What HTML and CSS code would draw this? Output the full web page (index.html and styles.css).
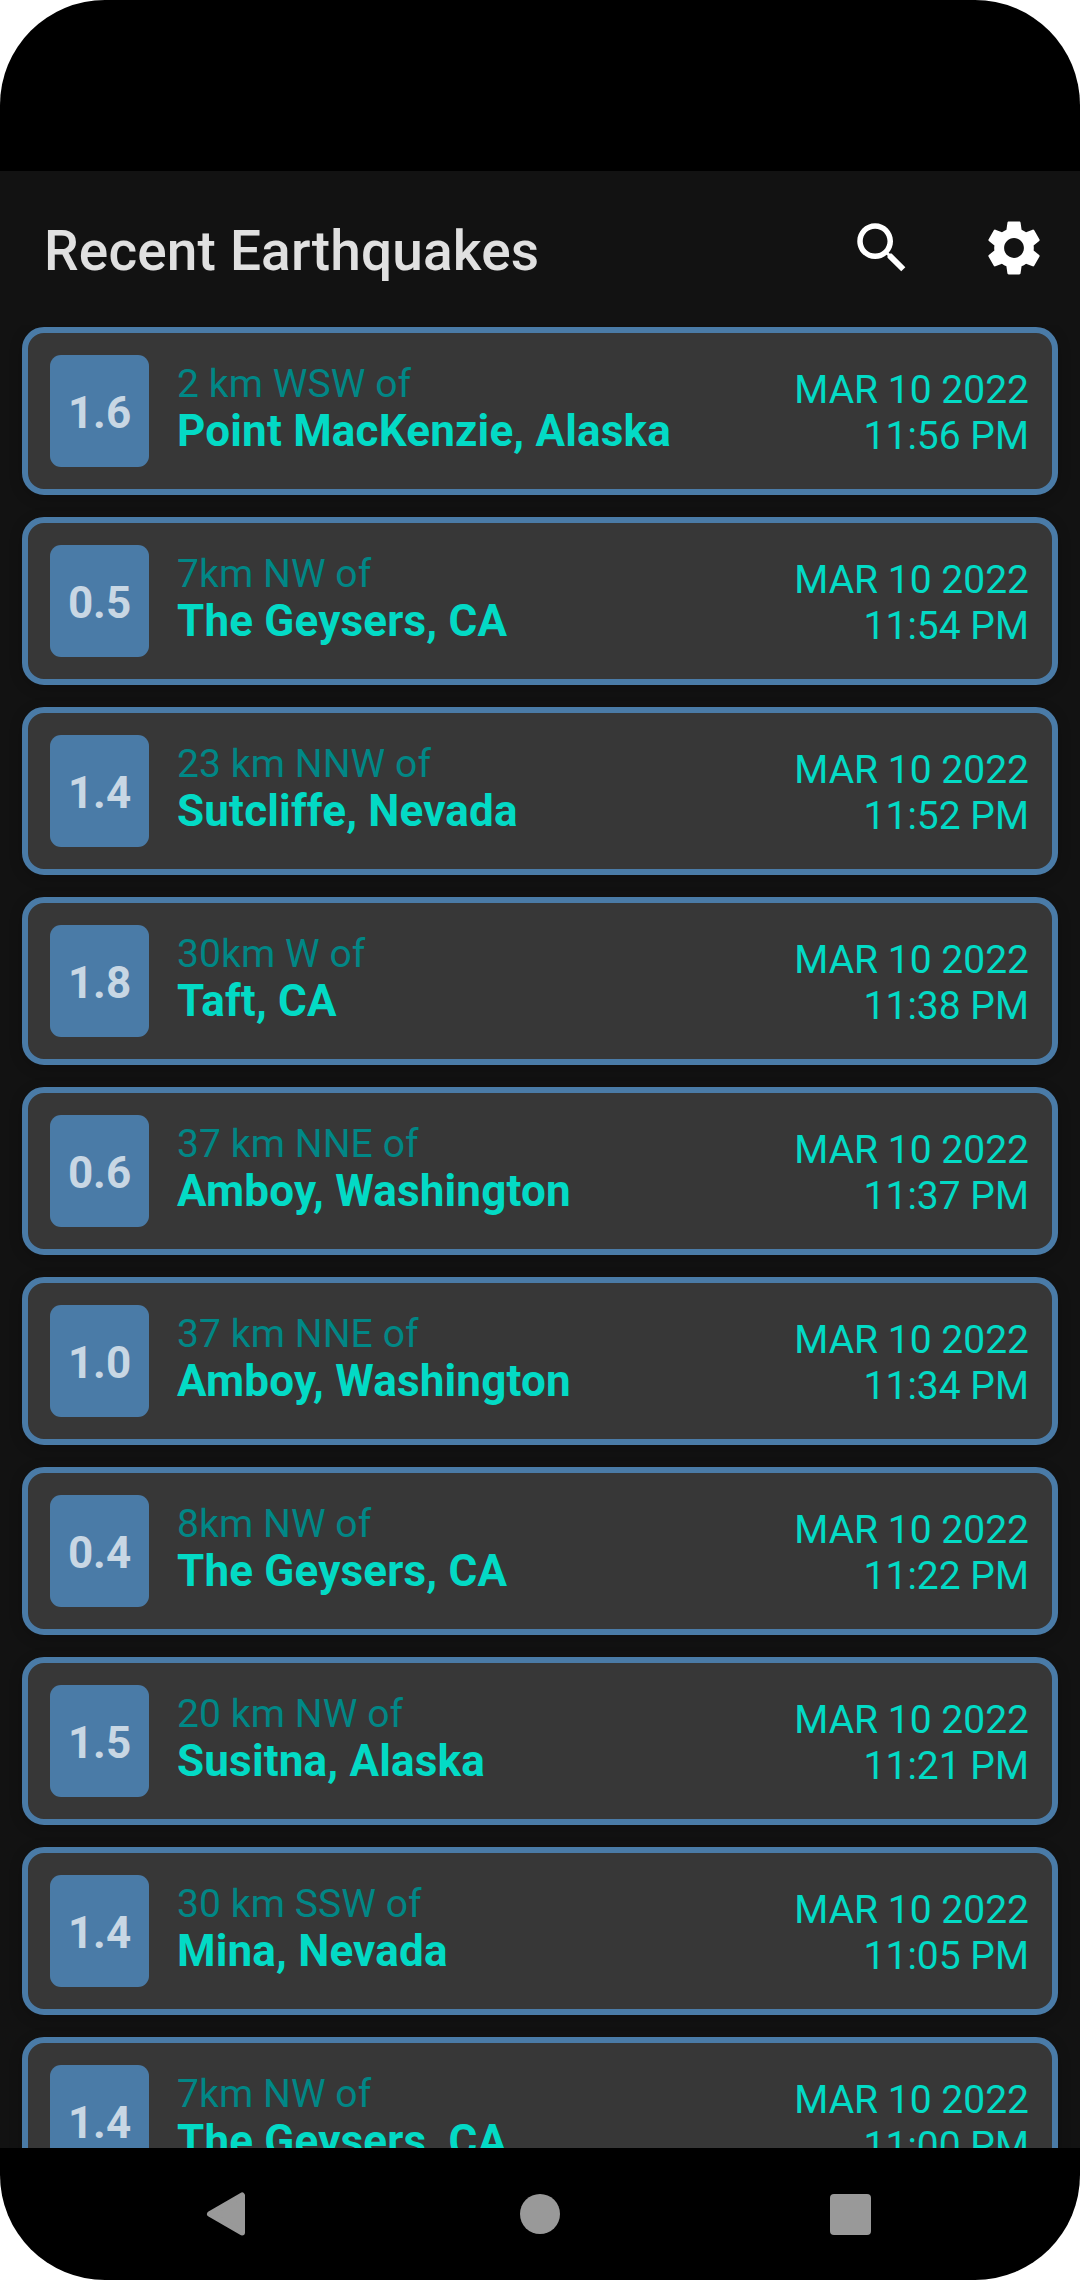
FILE: index.html
```html
<!DOCTYPE html>
<html lang="en">
<head>
<meta charset="utf-8">
<title>Recent Earthquakes</title>
<link rel="stylesheet" href="styles.css">
</head>
<body>
<div class="phone">
  <div class="status-bar"></div>
  <header class="app-bar">
    <h1 class="title">Recent Earthquakes</h1>
    <button class="action" aria-label="Search"><svg viewBox="0 0 24 24"><path d="M15.5,14h-0.79l-0.28,-0.27C15.41,12.59 16,11.11 16,9.5 16,5.91 13.09,3 9.5,3S3,5.91 3,9.5 5.91,16 9.5,16c1.61,0 3.09,-0.59 4.23,-1.57l0.27,0.28v0.79l5,4.99L20.49,19l-4.99,-5zM9.5,14C7.01,14 5,11.99 5,9.5S7.01,5 9.5,5 14,7.01 14,9.5 11.99,14 9.5,14z"/></svg></button>
    <button class="action" aria-label="Settings"><svg viewBox="0 0 24 24"><path d="M19.14,12.94c0.04,-0.3 0.06,-0.61 0.06,-0.94c0,-0.32 -0.02,-0.64 -0.07,-0.94l2.03,-1.58c0.18,-0.14 0.23,-0.41 0.12,-0.61l-1.92,-3.32c-0.12,-0.22 -0.37,-0.29 -0.59,-0.22l-2.39,0.96c-0.5,-0.38 -1.03,-0.7 -1.62,-0.94L14.4,2.81c-0.04,-0.24 -0.24,-0.41 -0.48,-0.41h-3.84c-0.24,0 -0.43,0.17 -0.47,0.41L9.25,5.35C8.66,5.59 8.12,5.92 7.63,6.29L5.24,5.33c-0.22,-0.08 -0.47,0 -0.59,0.22L2.74,8.87C2.62,9.08 2.66,9.34 2.86,9.48l2.03,1.58C4.84,11.36 4.8,11.69 4.8,12s0.02,0.64 0.07,0.94l-2.03,1.58c-0.18,0.14 -0.23,0.41 -0.12,0.61l1.92,3.32c0.12,0.22 0.37,0.29 0.59,0.22l2.39,-0.96c0.5,0.38 1.03,0.7 1.62,0.94l0.36,2.54c0.05,0.24 0.24,0.41 0.48,0.41h3.84c0.24,0 0.44,-0.17 0.47,-0.41l0.36,-2.54c0.59,-0.24 1.13,-0.56 1.62,-0.94l2.39,0.96c0.22,0.08 0.47,0 0.59,-0.22l1.92,-3.32c0.12,-0.22 0.07,-0.47 -0.12,-0.61L19.14,12.94zM12,15.6c-1.98,0 -3.6,-1.62 -3.6,-3.6s1.62,-3.6 3.6,-3.6s3.6,1.62 3.6,3.6S13.98,15.6 12,15.6z"/></svg></button>
  </header>
  <main class="list">
    <article class="card"><div class="badge">1.6</div><div class="place"><span class="offset">2 km WSW of</span><strong class="location">Point MacKenzie, Alaska</strong></div><div class="when"><span>MAR 10 2022</span><span>11:56 PM</span></div></article>
    <article class="card"><div class="badge">0.5</div><div class="place"><span class="offset">7km NW of</span><strong class="location">The Geysers, CA</strong></div><div class="when"><span>MAR 10 2022</span><span>11:54 PM</span></div></article>
    <article class="card"><div class="badge">1.4</div><div class="place"><span class="offset">23 km NNW of</span><strong class="location">Sutcliffe, Nevada</strong></div><div class="when"><span>MAR 10 2022</span><span>11:52 PM</span></div></article>
    <article class="card"><div class="badge">1.8</div><div class="place"><span class="offset">30km W of</span><strong class="location">Taft, CA</strong></div><div class="when"><span>MAR 10 2022</span><span>11:38 PM</span></div></article>
    <article class="card"><div class="badge">0.6</div><div class="place"><span class="offset">37 km NNE of</span><strong class="location">Amboy, Washington</strong></div><div class="when"><span>MAR 10 2022</span><span>11:37 PM</span></div></article>
    <article class="card"><div class="badge">1.0</div><div class="place"><span class="offset">37 km NNE of</span><strong class="location">Amboy, Washington</strong></div><div class="when"><span>MAR 10 2022</span><span>11:34 PM</span></div></article>
    <article class="card"><div class="badge">0.4</div><div class="place"><span class="offset">8km NW of</span><strong class="location">The Geysers, CA</strong></div><div class="when"><span>MAR 10 2022</span><span>11:22 PM</span></div></article>
    <article class="card"><div class="badge">1.5</div><div class="place"><span class="offset">20 km NW of</span><strong class="location">Susitna, Alaska</strong></div><div class="when"><span>MAR 10 2022</span><span>11:21 PM</span></div></article>
    <article class="card"><div class="badge">1.4</div><div class="place"><span class="offset">30 km SSW of</span><strong class="location">Mina, Nevada</strong></div><div class="when"><span>MAR 10 2022</span><span>11:05 PM</span></div></article>
    <article class="card"><div class="badge">1.4</div><div class="place"><span class="offset">7km NW of</span><strong class="location">The Geysers, CA</strong></div><div class="when"><span>MAR 10 2022</span><span>11:00 PM</span></div></article>
  </main>
  <nav class="nav-bar">
    <svg viewBox="0 0 66 66"><path d="M46 14.500V51.500L14 33Z" stroke-width="6" stroke-linejoin="round"/></svg>
    <svg viewBox="0 0 66 66"><circle cx="33" cy="33" r="20"/></svg>
    <svg viewBox="0 0 66 66"><rect x="12" y="13" width="41" height="41" rx="4"/></svg>
  </nav>
</div>
</body>
</html>
```
FILE: styles.css
```css
* {
  box-sizing: border-box;
}

body {
  margin: 0;
  background: #fff;
  font-family: Roboto, sans-serif;
}

.phone {
  display: flex;
  flex-direction: column;
  width: 1080px;
  height: 2280px;
  overflow: hidden;
  border-radius: 105px;
  background: #000;
}

.status-bar {
  flex: none;
  height: 171px;
}

.app-bar {
  flex: none;
  display: flex;
  align-items: center;
  height: 154px;
  padding-left: 44px;
  background: #121212;
}

.title {
  flex: 1;
  margin: 5px 0 0;
  color: #e0e0e0;
  font-size: 55px;
  font-weight: 500;
  letter-spacing: 0.15px;
  line-height: 64px;
}

.action {
  display: grid;
  place-items: center;
  width: 132px;
  height: 132px;
  padding: 0;
  border: 0;
  background: none;
}

.action svg {
  width: 66px;
  height: 66px;
  fill: #fff;
}

.list {
  flex: 1;
  display: flex;
  flex-direction: column;
  gap: 22px;
  min-height: 0;
  padding: 2px 22px 0;
  overflow: hidden;
  background: #121212;
}

.card {
  flex: none;
  display: flex;
  align-items: center;
  height: 168px;
  padding: 0 22px;
  border: 6px solid #4a7ba7;
  border-radius: 22px;
  background: #373737;
  box-shadow: 0 3px 14px rgba(0, 0, 0, 0.2);
}

.badge {
  width: 99px;
  height: 112px;
  border-radius: 11px;
  background: #4a7ba7;
  color: #c8d7e4;
  font-size: 44px;
  font-weight: 700;
  line-height: 116px;
  text-align: center;
}

.place {
  flex: 1;
  display: flex;
  flex-direction: column;
  margin-left: 28px;
  padding-bottom: 8px;
}

.offset {
  color: #018786;
  font-size: 39px;
  letter-spacing: 0.1px;
  line-height: 47px;
}

.location {
  color: #03dac5;
  font-size: 44px;
  font-weight: 700;
  letter-spacing: 0.18px;
  line-height: 46px;
}

.when {
  display: flex;
  flex-direction: column;
  padding: 3px 1px 0 0;
  color: #03dac5;
  font-size: 39px;
  line-height: 46px;
  text-align: right;
}

.nav-bar {
  flex: none;
  display: flex;
  align-items: center;
  justify-content: space-between;
  height: 132px;
  padding: 0 196px;
}

.nav-bar svg {
  width: 66px;
  height: 66px;
  fill: #999;
}

.nav-bar path {
  stroke: #999;
}
```
